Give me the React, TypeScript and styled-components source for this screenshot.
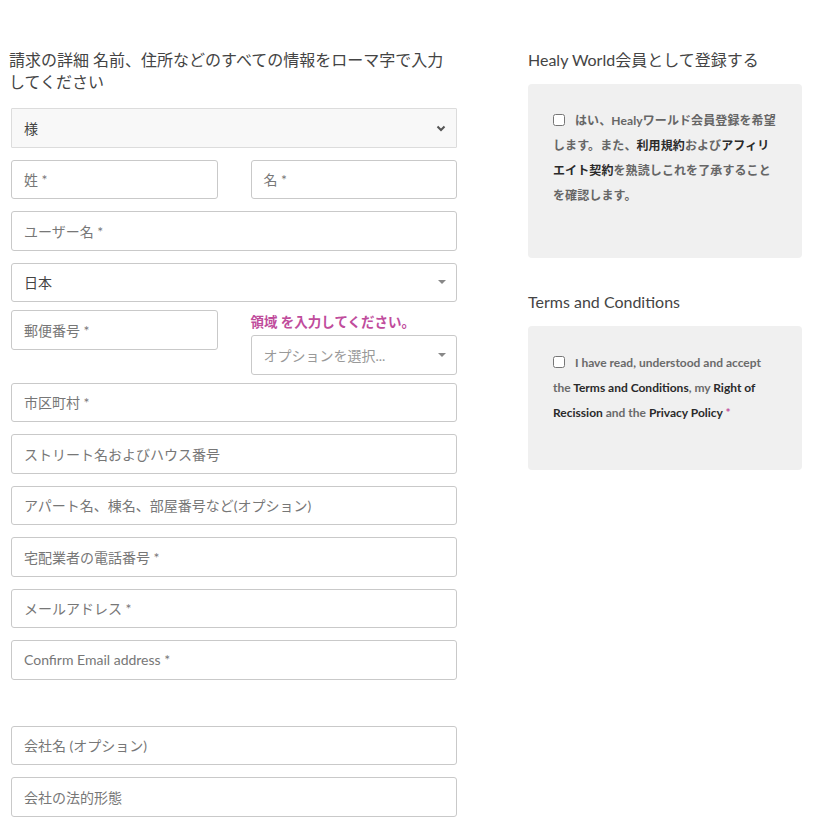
import React from "react";
import styled, { createGlobalStyle } from "styled-components";

const Global = createGlobalStyle`
  html, body { margin: 0; padding: 0; background: #fff; }
  body { font-family: Lato, "Noto Sans CJK JP", sans-serif; color: #444; }
  * { box-sizing: border-box; }
`;

const Page = styled.div`
  display: flex;
  align-items: flex-start;
  gap: 71px;
  padding: 49px 0 0 11px;
  width: 821px;
`;

const LeftCol = styled.div`
  width: 446px;
  display: flex;
  flex-direction: column;
`;

const RightCol = styled.div`
  width: 274px;
  display: flex;
  flex-direction: column;
`;

const Heading = styled.h3`
  margin: 0 0 15px -2px;
  width: 442px;
  font-size: 16px;
  line-height: 22px;
  font-weight: 400;
  color: #444;
`;

const SideHeading = styled.h3`
  margin: 0 0 13px 0;
  font-size: 16px;
  line-height: 22px;
  font-weight: 400;
  color: #444;
`;

const FieldBox = styled.div<{ $muted?: boolean; $gap?: number }>`
  position: relative;
  flex: 0 0 auto;
  height: 39.5px;
  margin-bottom: ${(p) => (p.$gap ?? 12)}px;
  border: 1px solid ${(p) => (p.$muted ? "#dcdcdc" : "#c9c9c9")};
  border-radius: ${(p) => (p.$muted ? "1px" : "3px")};
  background: ${(p) => (p.$muted ? "#f8f8f8" : "#fff")};
  display: flex;
  align-items: center;
  padding: 0 12px;
  font-size: 14px;
`;

const Text = styled.span<{ $tone?: "value" | "ph" | "light" }>`
  color: ${(p) => (p.$tone === "value" ? "#444" : p.$tone === "light" ? "#999" : "#777")};
  white-space: nowrap;
`;

const Arrow = styled.span`
  position: absolute;
  right: 9px;
  top: 50%;
  transform: translateY(-50%);
  display: flex;
`;

const Pair = styled.div<{ $gap?: number }>`
  display: grid;
  grid-template-columns: 1fr 1fr;
  column-gap: 33px;
  align-items: start;
  margin-bottom: ${(p) => (p.$gap ?? 0)}px;
`;

const Stack = styled.div`
  display: flex;
  flex-direction: column;
`;

const PinkLabel = styled.div`
  color: #c04c9c;
  font-weight: 700;
  font-size: 13.5px;
  line-height: 20px;
  margin: 2px 0 3px 0;
  white-space: nowrap;
`;

const Spacer = styled.div`
  height: 34px;
`;

const Card = styled.div<{ $bottom: number }>`
  background: #f0f0f0;
  border-radius: 4px;
  padding: 24px 24px ${(p) => p.$bottom}px 25px;
  margin-bottom: 33px;
`;

const CardText = styled.p<{ $latin?: boolean }>`
  margin: 0;
  font-size: 12px;
  line-height: 25px;
  font-weight: 700;
  color: ${(p) => (p.$latin ? "#6a6a6a" : "#666")};
  letter-spacing: ${(p) => (p.$latin ? "0" : "0.1px")};
`;

const Strong = styled.span`
  color: #2a2a2a;
`;

const Req = styled.span`
  color: #c04c9c;
`;

const Check = styled.input`
  width: 12px;
  height: 12px;
  margin: 0 7px 0 0;
  vertical-align: -1px;
`;

const Chevron = () => (
  <svg width="12" height="8" viewBox="0 0 12 8">
    <path d="M2.5 2.5 L6 6 L9.5 2.5" fill="none" stroke="#555" strokeWidth="2" />
  </svg>
);

const Caret = () => (
  <svg width="10" height="6" viewBox="0 0 10 6">
    <path d="M1 1 L9 1 L5 5 Z" fill="#888" />
  </svg>
);

type FieldProps = {
  text: string;
  tone?: "value" | "ph" | "light";
  muted?: boolean;
  arrow?: "chevron" | "caret";
  gap?: number;
};

const Field = ({ text, tone = "ph", muted, arrow, gap }: FieldProps) => (
  <FieldBox $muted={muted} $gap={gap}>
    <Text $tone={tone}>{text}</Text>
    {arrow && <Arrow>{arrow === "chevron" ? <Chevron /> : <Caret />}</Arrow>}
  </FieldBox>
);

export default function App() {
  return (
    <>
      <Global />
      <Page>
        <LeftCol>
          <Heading>請求の詳細 名前、住所などのすべての情報をローマ字で入力してください</Heading>
          <Field text="様" tone="value" muted arrow="chevron" />
          <Pair>
            <Field text="姓 *" />
            <Field text="名 *" />
          </Pair>
          <Field text="ユーザー名 *" />
          <Field text="日本" tone="value" arrow="caret" gap={8} />
          <Pair $gap={8}>
            <Field text="郵便番号 *" gap={0} />
            <Stack>
              <PinkLabel>領域 を入力してください。</PinkLabel>
              <Field text="オプションを選択..." tone="light" arrow="caret" gap={0} />
            </Stack>
          </Pair>
          <Field text="市区町村 *" />
          <Field text="ストリート名およびハウス番号" />
          <Field text="アパート名、棟名、部屋番号など(オプション)" />
          <Field text="宅配業者の電話番号 *" />
          <Field text="メールアドレス *" />
          <Field text="Confirm Email address *" />
          <Spacer />
          <Field text="会社名 (オプション)" />
          <Field text="会社の法的形態" />
        </LeftCol>
        <RightCol>
          <SideHeading>Healy World会員として登録する</SideHeading>
          <Card $bottom={50}>
            <CardText>
              <Check type="checkbox" /> はい、Healyワールド会員登録を希望します。また、
              <Strong>利用規約</Strong>および<Strong>アフィリエイト契約</Strong>を熟読しこれを了承することを確認します。
            </CardText>
          </Card>
          <SideHeading>Terms and Conditions</SideHeading>
          <Card $bottom={45}>
            <CardText $latin>
              <Check type="checkbox" /> I have read, understood and accept the{" "}
              <Strong>Terms and Conditions</Strong>, my <Strong>Right of Recission</Strong> and the{" "}
              <Strong>Privacy Policy</Strong> <Req>*</Req>
            </CardText>
          </Card>
        </RightCol>
      </Page>
    </>
  );
}
